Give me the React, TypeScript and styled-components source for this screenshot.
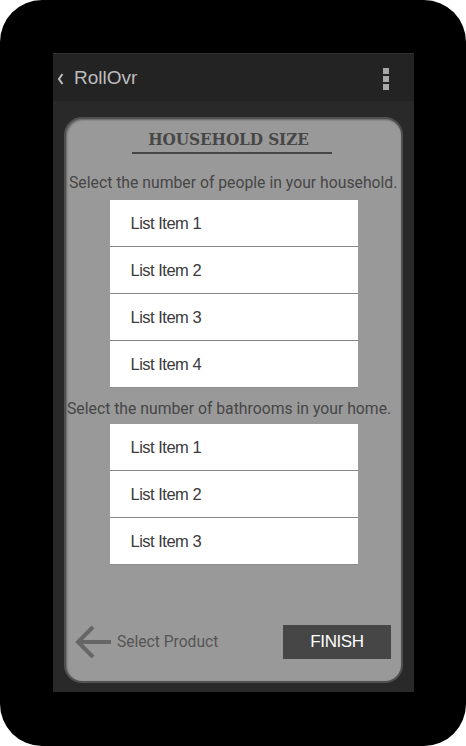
import React from 'react';
import styled, { createGlobalStyle } from 'styled-components';

const GlobalStyle = createGlobalStyle`
  html, body {
    margin: 0;
    padding: 0;
    background: #ffffff;
  }
`;

const Phone = styled.div`
  width: 466px;
  height: 746px;
  box-sizing: border-box;
  background: #000;
  border-radius: 42px;
  padding: 53px 52px 54px 53px;
`;

const Screen = styled.div`
  height: 100%;
  display: flex;
  flex-direction: column;
  background: #292929;
`;

const TopBar = styled.div`
  height: 48px;
  flex: none;
  box-sizing: border-box;
  display: flex;
  align-items: center;
  background: #232323;
  border-top: 1px solid #333;
  padding: 0 25px 0 3px;
`;

const BackChevron = styled.svg`
  width: 10px;
  height: 14px;
  margin-right: 8px;
  margin-top: 2px;
`;

const Title = styled.span`
  font-family: 'Liberation Sans', Arial, sans-serif;
  font-size: 19px;
  color: #bdbdbd;
  flex: 1;
`;

const Kebab = styled.div`
  display: flex;
  flex-direction: column;
  gap: 2px;
  margin-top: 2px;
`;

const KebabDot = styled.span`
  width: 6px;
  height: 6px;
  background: #a8a8a8;
`;

const Content = styled.div`
  flex: 1;
  display: flex;
  padding: 16px 11px 9px 11px;
`;

const Card = styled.div`
  flex: 1;
  display: flex;
  flex-direction: column;
  align-items: center;
  background: #999;
  border: 2px solid #505050;
  border-radius: 18px;
  box-shadow: inset 1px 1px 2px rgba(0, 0, 0, 0.35);
`;

const Heading = styled.h1`
  margin: 10px 10px 0 0;
  font-family: 'DejaVu Serif Condensed', 'DejaVu Serif', serif;
  font-stretch: condensed;
  font-weight: bold;
  font-size: 17px;
  line-height: 20px;
  letter-spacing: -0.1px;
  color: #474747;
`;

const Rule = styled.div`
  width: 200px;
  height: 2px;
  margin-top: 3px;
  margin-right: 4px;
  background: #474747;
`;

const Prompt = styled.p<{ $top: number; $indent: number }>`
  align-self: stretch;
  margin: ${(p) => p.$top}px 0 0;
  padding-left: ${(p) => p.$indent}px;
  font-family: Roboto, 'Liberation Sans', sans-serif;
  font-size: 15.75px;
  line-height: 20px;
  color: #464646;
  white-space: nowrap;
`;

const List = styled.ul<{ $top: number }>`
  list-style: none;
  margin: ${(p) => p.$top}px 0 0;
  padding: 0;
  width: 248px;
  background: #fff;
  box-shadow: 0 1px 0 #8c8c8c;
`;

const ListRow = styled.li`
  height: 46px;
  display: flex;
  align-items: center;
  padding: 1px 0 0 21px;
  box-sizing: border-box;
  font-family: 'Liberation Sans', Arial, sans-serif;
  font-size: 16.5px;
  letter-spacing: -0.5px;
  color: #3a3a3a;
  & + & {
    border-top: 1px solid #868686;
    height: 47px;
  }
`;

const Footer = styled.div`
  align-self: stretch;
  margin-top: auto;
  margin-bottom: 22px;
  display: flex;
  align-items: center;
  padding: 0 10px 0 9px;
`;

const BackLink = styled.div`
  display: flex;
  align-items: center;
  gap: 6px;
  flex: 1;
  font-family: Roboto, 'Liberation Sans', sans-serif;
  font-size: 15.6px;
  color: #555;
`;

const FinishButton = styled.button`
  width: 108px;
  height: 34px;
  border: none;
  background: #464646;
  color: #fff;
  font-family: 'Liberation Sans', Arial, sans-serif;
  font-size: 17px;
  letter-spacing: -0.4px;
  cursor: pointer;
`;

const people = ['List Item 1', 'List Item 2', 'List Item 3', 'List Item 4'];
const bathrooms = ['List Item 1', 'List Item 2', 'List Item 3'];

const App: React.FC = () => {
  return (
    <>
      <GlobalStyle />
      <Phone>
        <Screen>
          <TopBar>
            <BackChevron viewBox="0 0 10 14">
              <polyline
                points="6.5,2 3,7 6.5,12"
                fill="none"
                stroke="#bdbdbd"
                strokeWidth="2"
              />
            </BackChevron>
            <Title>RollOvr</Title>
            <Kebab>
              <KebabDot />
              <KebabDot />
              <KebabDot />
            </Kebab>
          </TopBar>
          <Content>
            <Card>
              <Heading>HOUSEHOLD SIZE</Heading>
              <Rule />
              <Prompt $top={19} $indent={3}>
                Select the number of people in your household.
              </Prompt>
              <List $top={7}>
                {people.map((item, i) => (
                  <ListRow key={i}>{item}</ListRow>
                ))}
              </List>
              <Prompt $top={12} $indent={1}>
                Select the number of bathrooms in your home.
              </Prompt>
              <List $top={5}>
                {bathrooms.map((item, i) => (
                  <ListRow key={i}>{item}</ListRow>
                ))}
              </List>
              <Footer>
                <BackLink>
                  <svg width="36" height="34" viewBox="0 0 36 34">
                    <path
                      d="M36 17H3M18 2L3 17l15 15"
                      fill="none"
                      stroke="#666"
                      strokeWidth="4"
                    />
                  </svg>
                  Select Product
                </BackLink>
                <FinishButton>FINISH</FinishButton>
              </Footer>
            </Card>
          </Content>
        </Screen>
      </Phone>
    </>
  );
};

export default App;
